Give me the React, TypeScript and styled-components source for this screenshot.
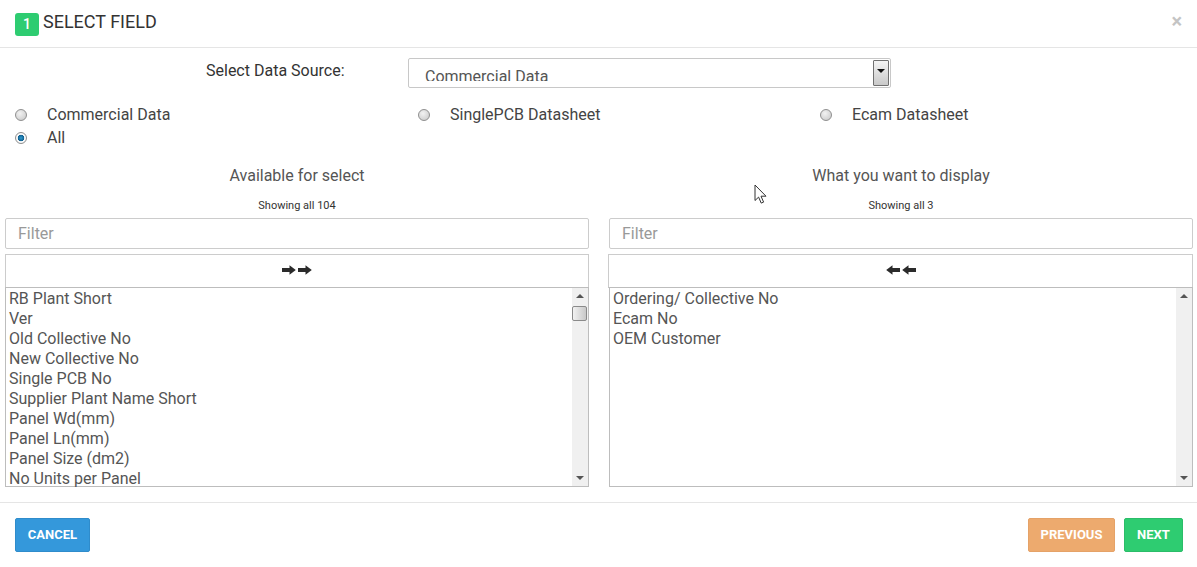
import React from "react";
import styled, { createGlobalStyle } from "styled-components";

const available = [
  "RB Plant Short",
  "Ver",
  "Old Collective No",
  "New Collective No",
  "Single PCB No",
  "Supplier Plant Name Short",
  "Panel Wd(mm)",
  "Panel Ln(mm)",
  "Panel Size (dm2)",
  "No Units per Panel",
];

const selected = ["Ordering/ Collective No", "Ecam No", "OEM Customer"];

const ArrowIcon = ({ left }: { left?: boolean }) => (
  <svg width="14" height="10" viewBox="0 0 14 10" style={left ? { transform: "scaleX(-1)" } : undefined}>
    <path d="M0 3h7.5V0.2L13.8 5l-6.3 4.8V7H0z" fill="#2b2b2b" />
  </svg>
);

const App = () => {
  return (
    <Modal>
      <GlobalStyle />
      <Header>
        <Badge>1</Badge>
        <Title>SELECT FIELD</Title>
        <Close>×</Close>
      </Header>

      <SourceRow>
        <SourceLabel>Select Data Source:</SourceLabel>
        <SourceSelect>
          <SourceValue>Commercial Data</SourceValue>
          <SelectArrow>
            <Caret />
          </SelectArrow>
        </SourceSelect>
      </SourceRow>

      <RadioGrid>
        <RadioItem>
          <Radio />
          Commercial Data
        </RadioItem>
        <RadioItem>
          <Radio />
          SinglePCB Datasheet
        </RadioItem>
        <RadioItem>
          <Radio />
          Ecam Datasheet
        </RadioItem>
        <RadioItem>
          <Radio $checked />
          All
        </RadioItem>
      </RadioGrid>

      <Columns>
        <Column>
          <ColumnTitle>Available for select</ColumnTitle>
          <Showing>Showing all 104</Showing>
          <Filter placeholder="Filter" />
          <MoveButton>
            <ArrowIcon />
            <ArrowIcon />
          </MoveButton>
          <ListBox>
            <Items>
              {available.map((item) => (
                <Item key={item}>{item}</Item>
              ))}
            </Items>
            <ScrollTrack>
              <ScrollUp />
              <ScrollThumb />
              <ScrollDown />
            </ScrollTrack>
          </ListBox>
        </Column>

        <Column>
          <ColumnTitle>What you want to display</ColumnTitle>
          <Showing>Showing all 3</Showing>
          <Filter placeholder="Filter" />
          <MoveButton $shift>
            <ArrowIcon left />
            <ArrowIcon left />
          </MoveButton>
          <ListBox>
            <Items>
              {selected.map((item) => (
                <Item key={item}>{item}</Item>
              ))}
            </Items>
            <ScrollTrack>
              <ScrollUp />
              <ScrollDown />
            </ScrollTrack>
          </ListBox>
        </Column>
      </Columns>

      <Footer>
        <FooterButton $bg="#3498db" $border="#2f8ccb" $width={75}>
          CANCEL
        </FooterButton>
        <FooterRight>
          <FooterButton $bg="#edaa6e" $border="#e5a268" $width={87}>
            PREVIOUS
          </FooterButton>
          <FooterButton $bg="#2ecc71" $border="#2bbd69" $width={59}>
            NEXT
          </FooterButton>
        </FooterRight>
      </Footer>

      <Cursor width="14" height="21" viewBox="0 0 14 21">
        <path
          d="M1 1v15.5l3.6-3.4 2.6 6 2.4-1-2.6-5.9h5z"
          fill="#fff"
          stroke="#333"
          strokeWidth="1"
        />
      </Cursor>
    </Modal>
  );
};

export default App;

const GlobalStyle = createGlobalStyle`
  html, body {
    margin: 0;
    padding: 0;
    background: #fff;
  }
  * {
    box-sizing: border-box;
  }
`;

const Modal = styled.div`
  position: relative;
  width: 1197px;
  height: 567px;
  overflow: hidden;
  background: #fff;
  color: #444;
  font-family: Roboto, "Liberation Sans", sans-serif;
`;

const Header = styled.div`
  display: flex;
  align-items: center;
  height: 48px;
  padding: 1px 15px 0 15px;
  border-bottom: 1px solid #e5e5e5;
`;

const Badge = styled.span`
  display: flex;
  align-items: center;
  justify-content: center;
  width: 24px;
  height: 23px;
  margin-right: 4px;
  border-radius: 3px;
  background: #2ecc71;
  color: #fff;
  font-size: 14px;
  font-weight: 500;
`;

const Title = styled.span`
  flex: 1;
  margin-top: -5px;
  color: #333;
  font-size: 18px;
`;

const Close = styled.span`
  margin-top: -7px;
  color: #c4c4c4;
  font-size: 20px;
  font-weight: 700;
`;

const SourceRow = styled.div`
  display: flex;
  align-items: flex-start;
  height: 50px;
  padding: 10px 0 0 206px;
`;

const SourceLabel = styled.span`
  width: 202px;
  padding-top: 5px;
  color: #333;
  font-size: 16px;
  line-height: 16px;
`;

const SourceSelect = styled.div`
  display: flex;
  justify-content: space-between;
  width: 483px;
  height: 30px;
  padding: 1px;
  border: 1px solid #c8c8c8;
  border-radius: 2px;
`;

const SourceValue = styled.span`
  height: 21px;
  padding: 7px 0 0 15px;
  overflow: hidden;
  color: #555;
  font-size: 16px;
  line-height: 20px;
`;

const SelectArrow = styled.span`
  display: flex;
  align-items: center;
  justify-content: center;
  width: 16px;
  height: 26px;
  border: 1px solid #707070;
  border-radius: 1px;
  background: linear-gradient(#f4f4f4, #c9c9c9);
`;

const Caret = styled.span`
  width: 0;
  height: 0;
  margin-top: -5px;
  border-top: 4px solid #111;
  border-left: 4px solid transparent;
  border-right: 4px solid transparent;
`;

const RadioGrid = styled.div`
  display: grid;
  grid-template-columns: 403px 402px 1fr;
  grid-auto-rows: 23px;
  height: 68px;
  padding: 5px 0 0 15px;
`;

const RadioItem = styled.label`
  display: flex;
  align-items: center;
  color: #444;
  font-size: 16px;
`;

const Radio = styled.span<{ $checked?: boolean }>`
  width: 12px;
  height: 12px;
  margin-right: 20px;
  border: 1px solid #8f8f8f;
  border-radius: 50%;
  background: ${(p) =>
    p.$checked
      ? "radial-gradient(circle, #2f9bd0 0, #0f5f8f 3px, #ffffff 3.6px, #e4e4e4 100%)"
      : "radial-gradient(circle at 40% 35%, #f2f2f2, #c6c6c6)"};
`;

const Columns = styled.div`
  display: grid;
  grid-template-columns: 584px 584px;
  column-gap: 20px;
  padding-left: 5px;
`;

const Column = styled.div`
  display: flex;
  flex-direction: column;
  align-items: stretch;
`;

const ColumnTitle = styled.div`
  height: 28px;
  color: #555;
  font-size: 16px;
  line-height: 20px;
  text-align: center;
`;

const Showing = styled.div`
  height: 23px;
  padding-top: 5px;
  color: #333;
  font-size: 11px;
  line-height: 14px;
  text-align: center;
`;

const Filter = styled.input`
  width: 100%;
  height: 31px;
  margin-top: 1px;
  padding: 0 12px;
  border: 1px solid #ccc;
  border-radius: 2px;
  background: #fff;
  font-family: inherit;
  font-size: 16px;
  outline: none;
  &::placeholder {
    color: #999;
    opacity: 1;
  }
`;

const MoveButton = styled.div<{ $shift?: boolean }>`
  display: flex;
  align-items: center;
  justify-content: center;
  gap: 2px;
  height: 34px;
  margin-top: 5px;
  margin-left: ${(p) => (p.$shift ? "-1px" : "0")};
  padding-bottom: 2px;
  border: 1px solid #ccc;
  border-bottom-color: #bbb;
  background: #fff;
`;

const ListBox = styled.div`
  display: flex;
  height: 200px;
  margin-top: -1px;
  border: 1px solid #bdbdbd;
`;

const Items = styled.div`
  flex: 1;
  padding: 1px 3px 0;
`;

const Item = styled.div`
  color: #555;
  font-size: 16px;
  line-height: 20px;
  white-space: nowrap;
`;

const ScrollTrack = styled.div`
  position: relative;
  display: flex;
  flex-direction: column;
  align-items: center;
  justify-content: space-between;
  width: 16px;
  padding: 6px 0;
  background: #f0f0f0;
`;

const ScrollUp = styled.span`
  width: 0;
  height: 0;
  border-bottom: 4px solid #555;
  border-left: 4px solid transparent;
  border-right: 4px solid transparent;
`;

const ScrollDown = styled.span`
  width: 0;
  height: 0;
  border-top: 4px solid #555;
  border-left: 4px solid transparent;
  border-right: 4px solid transparent;
`;

const ScrollThumb = styled.span`
  position: absolute;
  top: 18px;
  left: 0;
  width: 15px;
  height: 15px;
  border: 1px solid #8a8a8a;
  border-radius: 2px;
  background: linear-gradient(90deg, #f2f2f2, #c8c8c8);
`;

const Footer = styled.div`
  display: flex;
  align-items: flex-start;
  justify-content: space-between;
  height: 65px;
  margin-top: 15px;
  padding: 15px 14px 0 15px;
  border-top: 1px solid #e5e5e5;
`;

const FooterRight = styled.div`
  display: flex;
  gap: 9px;
`;

const FooterButton = styled.button<{ $bg: string; $border: string; $width: number }>`
  width: ${(p) => p.$width}px;
  height: 34px;
  padding: 0 0 2px;
  border: 1px solid ${(p) => p.$border};
  border-radius: 2px;
  background: ${(p) => p.$bg};
  color: #fff;
  font-family: inherit;
  font-size: 13px;
  font-weight: 700;
`;

const Cursor = styled.svg`
  position: absolute;
  top: 184px;
  left: 754px;
`;
